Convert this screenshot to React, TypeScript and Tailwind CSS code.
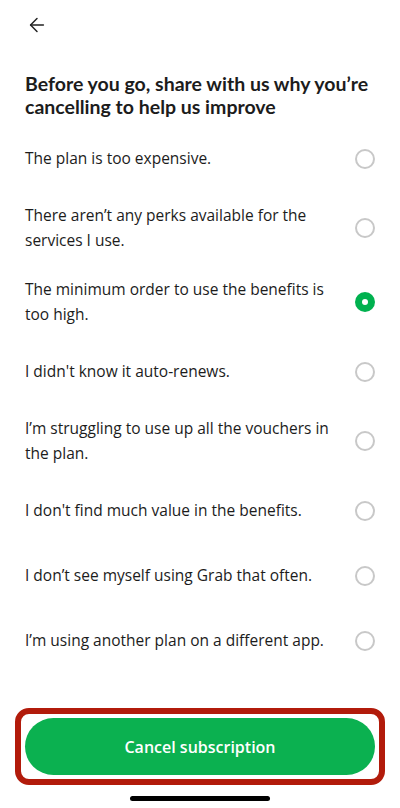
import { ArrowLeft } from 'lucide-react';

const reasons = [
  'The plan is too expensive.',
  'There aren’t any perks available for the services I use.',
  'The minimum order to use the benefits is too high.',
  "I didn't know it auto-renews.",
  'I’m struggling to use up all the vouchers in the plan.',
  "I don't find much value in the benefits.",
  'I don’t see myself using Grab that often.',
  'I’m using another plan on a different app.',
];

const App = () => {
  const selected = 2;

  return (
    <div className="h-[808px] w-[400px] bg-white flex flex-col text-[#1c1c1c] font-['Open_Sans',sans-serif] overflow-hidden">
      {/* Header */}
      <div className="pt-[14px] pl-[26px]">
        <ArrowLeft size={22} strokeWidth={1.6} className="text-[#222]" />
      </div>

      <h1 className="mt-[36px] px-[25px] text-[19.5px] leading-[23px] font-bold font-['Lato',sans-serif]">
        Before you go, share with us why you’re cancelling to help us improve
      </h1>

      {/* Reasons */}
      <div className="mt-2 flex flex-col">
        {reasons.map((reason, i) => (
          <div key={i} className="min-h-[65px] py-3 px-[25px] flex items-center gap-4">
            <p className="flex-1 text-[15.5px] leading-[25px]">{reason}</p>
            {i === selected ? (
              <span className="w-5 h-5 rounded-full bg-[#00b14f] flex items-center justify-center shrink-0">
                <span className="w-[6px] h-[6px] rounded-full bg-white" />
              </span>
            ) : (
              <span className="w-5 h-5 rounded-full border-2 border-[#c8c8c8] shrink-0" />
            )}
          </div>
        ))}
      </div>

      <div className="flex-1" />

      {/* Footer */}
      <div className="mx-[15px] border-[6px] border-[#b21b0b] rounded-[14px] p-1">
        <button className="w-full h-[57px] rounded-full bg-[#0bb150] text-white text-[16px] font-semibold">
          Cancel subscription
        </button>
      </div>
      <div className="flex justify-center pt-[11px] pb-[7px]">
        <div className="w-[140px] h-[5px] rounded-full bg-black" />
      </div>
    </div>
  );
};

export default App;
